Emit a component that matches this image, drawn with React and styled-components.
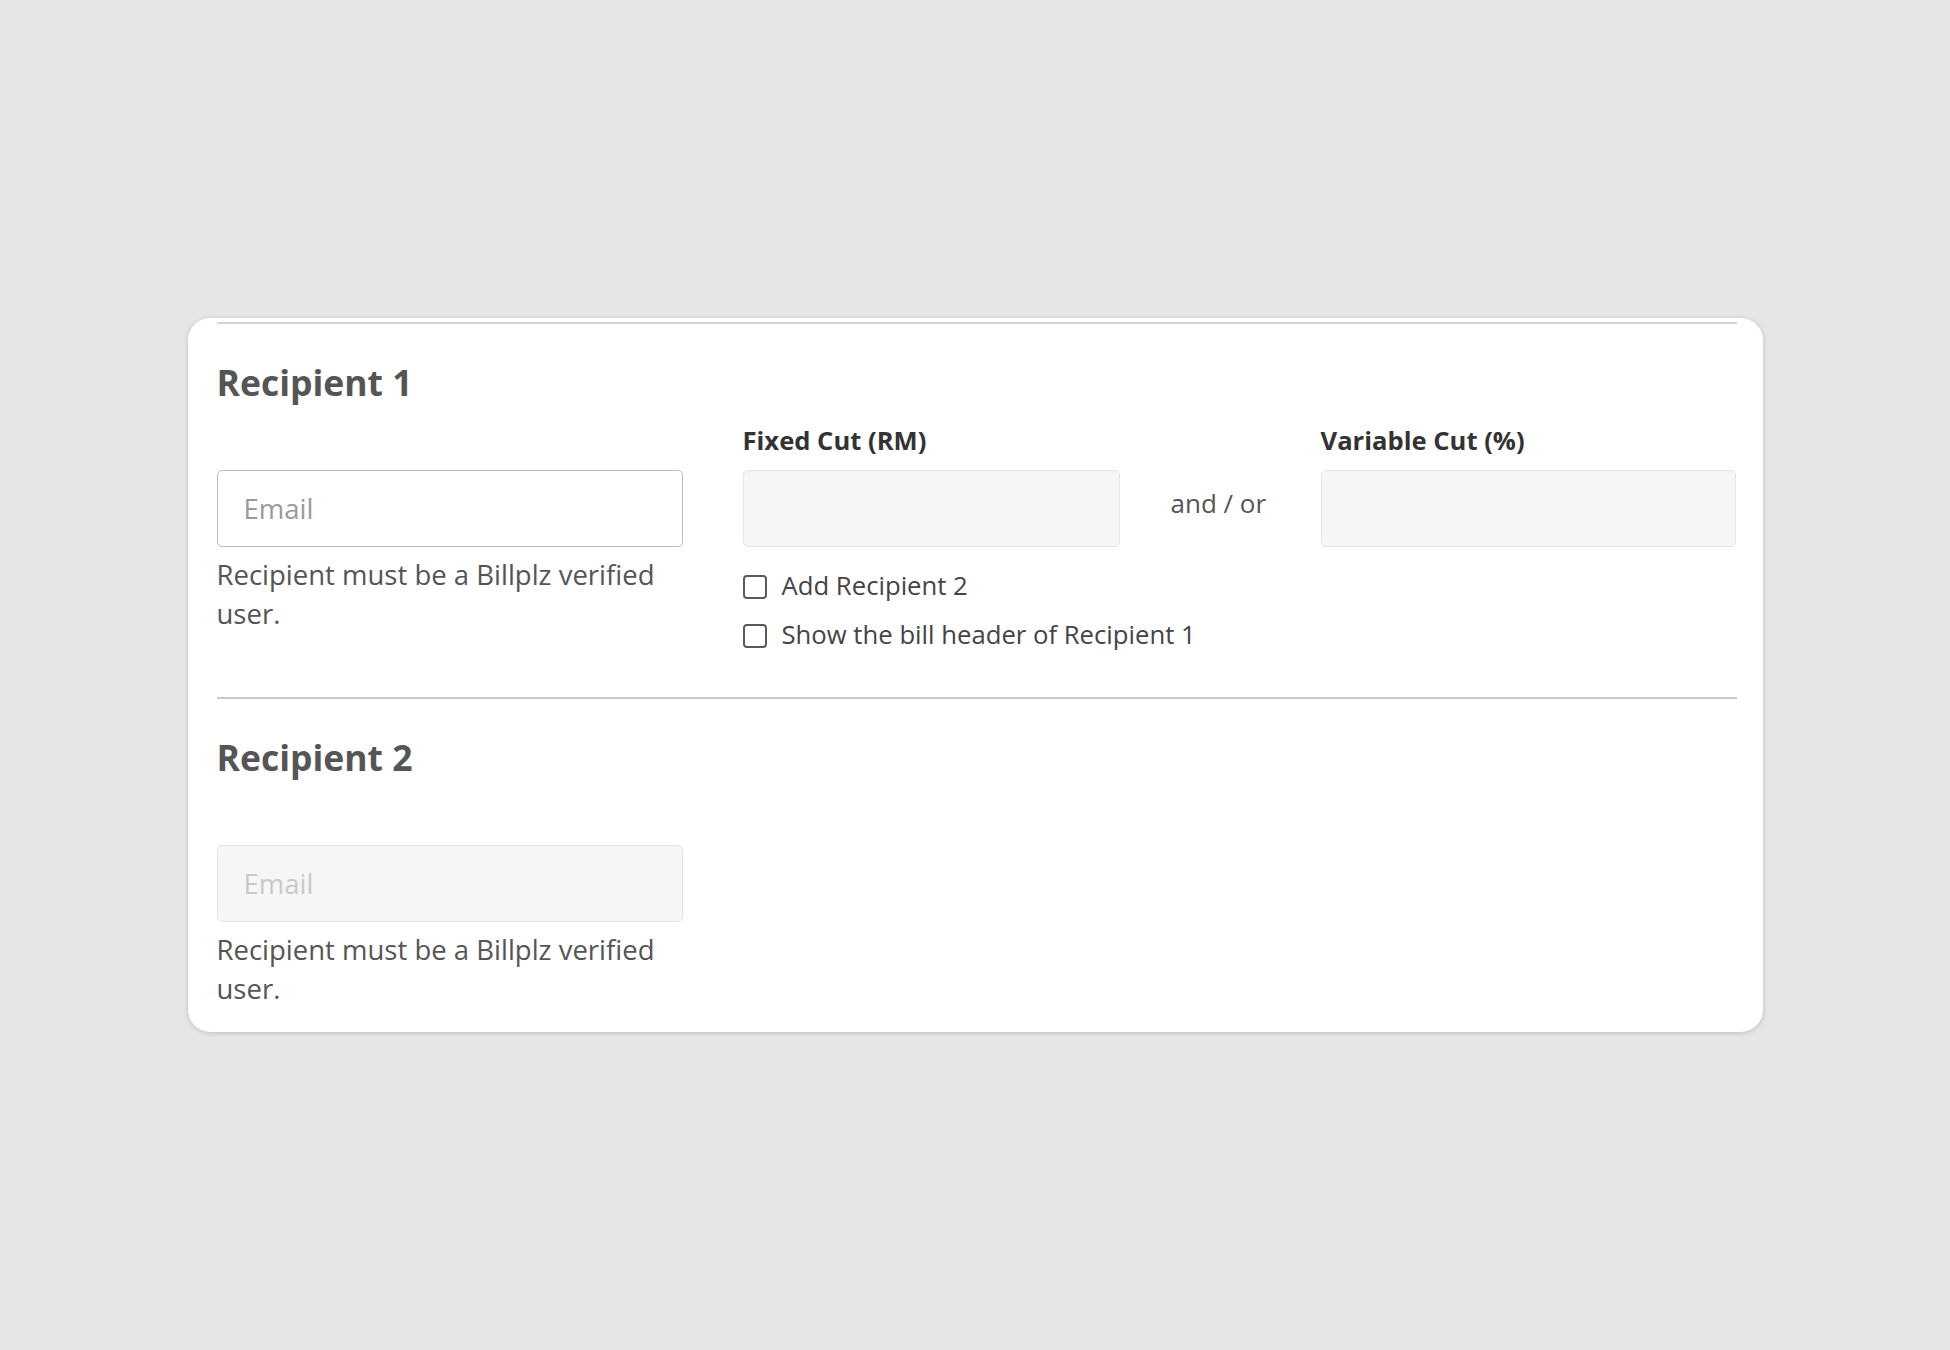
import React from 'react'
import styled, { createGlobalStyle } from "styled-components";

const GlobalStyle = createGlobalStyle`
    html, body {
        margin: 0;
        padding: 0;
        background: #e6e6e6;
        font-family: "Open Sans", "Noto Sans", sans-serif;
    }
`;

function RecipientSection({ number, withCuts }) {
    return (
        <Section>
            <Rule $top={number === 1} />
            <Title>Recipient {number}</Title>
            <Columns>
                <EmailCol>
                    <Label>&nbsp;</Label>
                    <TextInput placeholder="Email" disabled={!withCuts} $muted={!withCuts} />
                    <Help>Recipient must be a Billplz verified user.</Help>
                </EmailCol>

                {withCuts && (
                    <SplitCol>
                        <CutRow>
                            <Field $width="377px">
                                <Label>Fixed Cut (RM)</Label>
                                <TextInput disabled $muted />
                            </Field>
                            <AndOr>and / or</AndOr>
                            <Field $width="415px">
                                <Label>Variable Cut (%)</Label>
                                <TextInput disabled $muted />
                            </Field>
                        </CutRow>
                        <Checks>
                            <CheckRow>
                                <Box type="checkbox" />
                                Add Recipient 2
                            </CheckRow>
                            <CheckRow>
                                <Box type="checkbox" />
                                Show the bill header of Recipient 1
                            </CheckRow>
                        </Checks>
                    </SplitCol>
                )}
            </Columns>
        </Section>
    )
}

export default function App() {
    return (
        <Page>
            <GlobalStyle />
            <Card>
                <RecipientSection number={1} withCuts />
                <RecipientSection number={2} />
            </Card>
        </Page>
    )
}


const Page = styled.div`
    display: flex;
    align-items: center;
    justify-content: center;
    min-height: 100vh;
`;

const Card = styled.div`
    width: 1575px;
    box-sizing: border-box;
    background: #fff;
    border-radius: 22px;
    box-shadow: 0 1px 5px rgba(0, 0, 0, 0.18);
    padding: 4px 26px 24px 29px;
`;

const Section = styled.div`
    display: flex;
    flex-direction: column;
`;

const Rule = styled.div`
    height: ${p => p.$top ? '2px' : '1.5px'};
    background: ${p => p.$top ? '#d4d4d4' : '#c9c9c9'};
    margin-top: ${p => p.$top ? '0' : '43px'};
`;

const Title = styled.h2`
    margin: 37px 0 0;
    font-size: 35.5px;
    line-height: 43px;
    font-weight: 700;
    color: #555;
`;

const Columns = styled.div`
    display: flex;
    margin-top: 19px;
`;

const EmailCol = styled.div`
    width: 466px;
    flex-shrink: 0;
    margin-right: 60px;
    display: flex;
    flex-direction: column;
`;

const SplitCol = styled.div`
    display: flex;
    flex-direction: column;
`;

const CutRow = styled.div`
    display: flex;
`;

const Field = styled.div`
    width: ${p => p.$width};
    flex-shrink: 0;
    display: flex;
    flex-direction: column;
`;

const Label = styled.label`
    display: block;
    height: 36px;
    margin-bottom: 11px;
    font-size: 25.6px;
    line-height: 36px;
    font-weight: 700;
    color: #333;
    white-space: nowrap;
`;

const TextInput = styled.input`
    box-sizing: border-box;
    width: 100%;
    height: 77px;
    margin: 0;
    padding: 0 26px;
    border-radius: 5px;
    border: 1.5px solid ${p => p.$muted ? '#e4e4e4' : '#bdbdbd'};
    background: ${p => p.$muted ? '#f6f6f6' : '#fff'};
    font-family: inherit;
    font-size: 27.5px;
    color: #555;
    outline: none;

    &::placeholder {
        color: ${p => p.$muted ? '#c9c9c9' : '#9a9a9a'};
    }
`;

const Help = styled.p`
    margin: 8px 0 0;
    font-size: 27.5px;
    line-height: 39px;
    color: #555;
`;

const AndOr = styled.div`
    width: 201px;
    flex-shrink: 0;
    box-sizing: border-box;
    padding: 62px 0 0 51px;
    font-size: 26px;
    line-height: 36px;
    color: #555;
`;

const Checks = styled.div`
    display: flex;
    flex-direction: column;
    gap: 10px;
    margin-top: 19px;
`;

const CheckRow = styled.label`
    display: flex;
    align-items: center;
    gap: 15px;
    font-size: 25.7px;
    line-height: 39px;
    color: #444;
`;

const Box = styled.input`
    appearance: none;
    flex-shrink: 0;
    margin: 3px 0 0;
    width: 24px;
    height: 24px;
    box-sizing: border-box;
    border: 2px solid #5a5a5a;
    border-radius: 4px;
    background: #fff;
`;
